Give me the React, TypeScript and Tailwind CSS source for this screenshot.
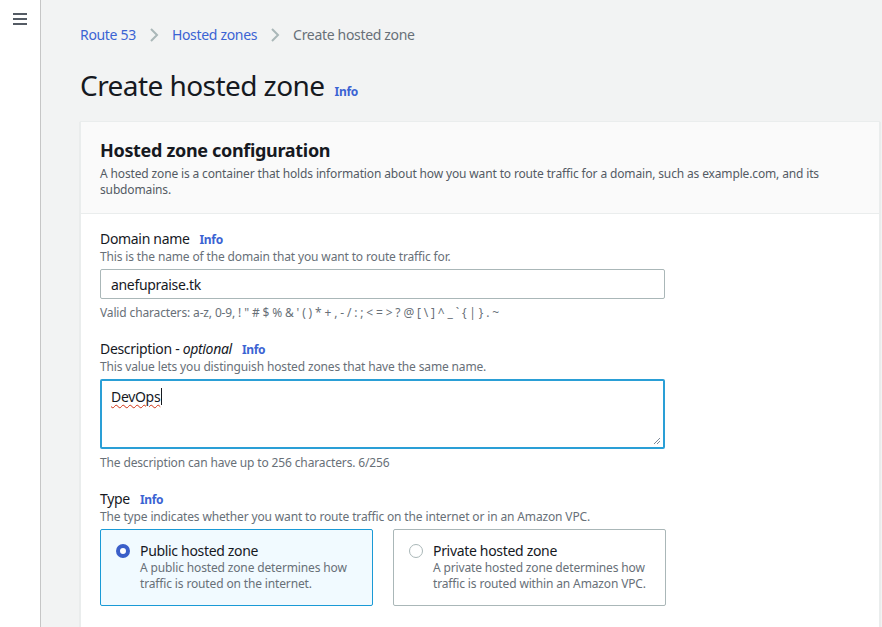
import React from 'react'

const font = { fontFamily: '"Noto Sans", "Open Sans", sans-serif' }

const Info = ({ className = '' }: { className?: string }) => (
  <span className={`text-[12px] font-bold leading-[16px] text-[#3b63d3] ${className}`}>Info</span>
)

const Chevron = () => (
  <svg width="10" height="16" viewBox="0 0 10 16" className="mx-[13px]">
    <path d="M2 2 L8 8 L2 14" fill="none" stroke="#aab7b8" strokeWidth="2" />
  </svg>
)

const Radio = ({ checked }: { checked: boolean }) =>
  checked ? (
    <span className="mt-[2px] h-[14px] w-[14px] shrink-0 rounded-full border-[4px] border-[#3b5fc9] bg-white" />
  ) : (
    <span className="mt-[2px] h-[14px] w-[14px] shrink-0 rounded-full border border-[#aab7b8] bg-white" />
  )

const Tile = ({ checked, title, desc }: { checked: boolean; title: string; desc: string }) => (
  <div
    className={`flex h-[77px] w-[273px] gap-[10px] rounded-[2px] border pl-[15px] pr-[12px] pt-[12px] ${
      checked ? 'border-[#1a9ad6] bg-[#f1faff]' : 'border-[#aab7b8] bg-white'
    }`}
  >
    <Radio checked={checked} />
    <div>
      <div className="text-[14px] leading-[18px] text-[#16191f]">{title}</div>
      <div className="text-[12px] leading-[16px] tracking-[-0.012em] text-[#687078]">{desc}</div>
    </div>
  </div>
)

const Label = ({ children }: { children: React.ReactNode }) => (
  <div className="flex h-[18px] items-baseline gap-[10px] text-[14px] leading-[18px] text-[#16191f]">{children}</div>
)

const Hint = ({ children, className = '' }: { children: React.ReactNode; className?: string }) => (
  <p className={`h-[16px] pt-[1px] text-[12px] leading-[16px] tracking-[-0.012em] text-[#687078] ${className}`}>{children}</p>
)

export default function App() {
  return (
    <div className="flex min-h-[627px] bg-[#f2f3f3] tracking-[-0.02em]" style={font}>
      <aside className="w-[41px] shrink-0 border-r border-[#c6c6c6] bg-white pl-[13px] pt-[13px]">
        <div className="flex w-[14px] flex-col gap-[3px]">
          <span className="h-[2px] bg-[#545b64]" />
          <span className="h-[2px] bg-[#545b64]" />
          <span className="h-[2px] bg-[#545b64]" />
        </div>
      </aside>
      <main className="flex-1 pl-[39px] pr-[2px]">
        <nav className="mt-[25px] flex h-[20px] items-center text-[14px] leading-[20px]">
          <span className="text-[#3b63d3]">Route 53</span>
          <Chevron />
          <span className="text-[#3b63d3]">Hosted zones</span>
          <Chevron />
          <span className="text-[#687078]">Create hosted zone</span>
        </nav>
        <div className="mt-[23px] flex h-[34px] items-baseline gap-[10px]">
          <h1 className="text-[28px] leading-[34px] tracking-[-0.02em] text-[#16191f]">Create hosted zone</h1>
          <Info />
        </div>
        <section className="mt-[19px] border border-[#eaeded] bg-white shadow-[0_1px_1px_rgba(0,28,36,0.2)]">
          <header className="border-b border-[#eaeded] bg-[#fafafa] px-[19px] pb-[15px] pt-[17px]">
            <h2 className="text-[18px] font-bold leading-[22px] text-[#16191f]">Hosted zone configuration</h2>
            <p className="mt-[5px] text-[12px] leading-[16px] tracking-[-0.012em] text-[#545b64]">
              A hosted zone is a container that holds information about how you want to route traffic for a domain, such as example.com, and its subdomains.
            </p>
          </header>
          <div className="px-[19px] pb-[24px] pt-[16px]">
            <Label>
              Domain name <Info />
            </Label>
            <Hint>This is the name of the domain that you want to route traffic for.</Hint>
            <div className="mt-[5px] flex h-[30px] w-[565px] items-center rounded-[2px] border border-[#aab7b8] bg-white px-[10px] text-[14px] text-[#16191f]">
              anefupraise.tk
            </div>
            <Hint className="mt-[5px]">
              Valid characters: a-z, 0-9, ! " # $ % &amp; ' ( ) * + , - / : ; &lt; = &gt; ? @ [ \ ] ^ _ ` {'{'} | {'}'} . ~
            </Hint>

            <div className="mt-[20px]">
              <Label>
                <span>
                  Description - <i>optional</i>
                </span>
                <Info />
              </Label>
            </div>
            <Hint>This value lets you distinguish hosted zones that have the same name.</Hint>
            <div className="relative mt-[5px] h-[70px] w-[565px] rounded-[2px] border-2 border-[#2a9fd6] bg-white px-[9px] pt-[4px] text-[14px] leading-[22px] text-[#16191f]">
              <span className="underline decoration-wavy decoration-[#d13212] decoration-1 underline-offset-2">DevOps</span>
              <span className="ml-[1px] inline-block h-[17px] w-px translate-y-[3px] bg-[#16191f]" />
              <svg width="8" height="8" viewBox="0 0 8 8" className="absolute bottom-[2px] right-[2px]">
                <path d="M7 1 L1 7 M7 4 L4 7" stroke="#7d8998" strokeWidth="1" />
              </svg>
            </div>
            <Hint className="mt-[5px]">The description can have up to 256 characters. 6/256</Hint>

            <div className="mt-[20px]">
              <Label>
                Type <Info />
              </Label>
            </div>
            <Hint>The type indicates whether you want to route traffic on the internet or in an Amazon VPC.</Hint>
            <div className="mt-[5px] flex gap-[20px]">
              <Tile checked title="Public hosted zone" desc="A public hosted zone determines how traffic is routed on the internet." />
              <Tile checked={false} title="Private hosted zone" desc="A private hosted zone determines how traffic is routed within an Amazon VPC." />
            </div>
          </div>
        </section>
      </main>
    </div>
  )
}
